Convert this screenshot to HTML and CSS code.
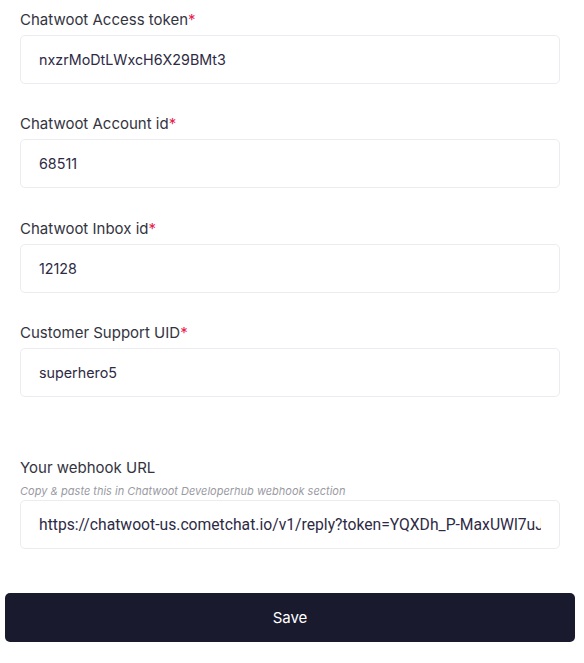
FILE: index.html
```html
<!DOCTYPE html>
<html>
<head>
<meta charset="utf-8">
<link rel="stylesheet" href="styles.css">
</head>
<body>
<form class="form">
  <div class="fields">
    <div class="field">
      <label class="label">Chatwoot Access token<span class="req">*</span></label>
      <input class="input" type="text" value="nxzrMoDtLWxcH6X29BMt3">
    </div>
    <div class="field">
      <label class="label">Chatwoot Account id<span class="req">*</span></label>
      <input class="input" type="text" value="68511">
    </div>
    <div class="field">
      <label class="label">Chatwoot Inbox id<span class="req">*</span></label>
      <input class="input" type="text" value="12128">
    </div>
    <div class="field">
      <label class="label">Customer Support UID<span class="req">*</span></label>
      <input class="input" type="text" value="superhero5">
    </div>
    <div class="field field-webhook">
      <label class="label">Your webhook URL</label>
      <div class="hint">Copy &amp; paste this in Chatwoot Developerhub webhook section</div>
      <input class="input input-url" type="text" value="https://chatwoot-us.cometchat.io/v1/reply?token=YQXDh_P-MaxUWl7uJ4kQ">
    </div>
  </div>
  <button class="save" type="button">Save</button>
</form>
</body>
</html>
```
FILE: styles.css
```css
* { box-sizing: border-box; }
html, body { margin: 0; padding: 0; background: #fff; }
body { font-family: Inter, "Noto Sans", sans-serif; }
.form { padding: 8px 9px 0 5px; }
.fields { padding: 0 15px; }
.field { display: flex; flex-direction: column; margin-bottom: 28.3px; }
.label { font-size: 15px; line-height: 24px; color: #34343f; margin-bottom: 3px; }
.req { color: #e8204d; }
.input {
  height: 49px;
  border: 1px solid #ececf0;
  border-radius: 5px;
  padding: 0 18px;
  font-family: Inter, sans-serif;
  font-size: 14.3px;
  color: #2e2a45;
  background: #fff;
  outline: none;
  width: 100%;
}
.field-webhook { margin-top: 59px; margin-bottom: 44px; }
.field-webhook .label { margin-bottom: 0; }
.hint { font-size: 11px; font-style: italic; color: #9a9aa3; line-height: 16px; margin-top: 3px; margin-bottom: 1px; }
.input-url { font-family: Roboto, sans-serif; font-size: 15.7px; }
.save {
  display: block;
  width: 570px;
  height: 49px;
  border: none;
  border-radius: 5px;
  background: #1a1a2e;
  color: #fff;
  font-family: Inter, sans-serif;
  font-size: 15px;
}
```
